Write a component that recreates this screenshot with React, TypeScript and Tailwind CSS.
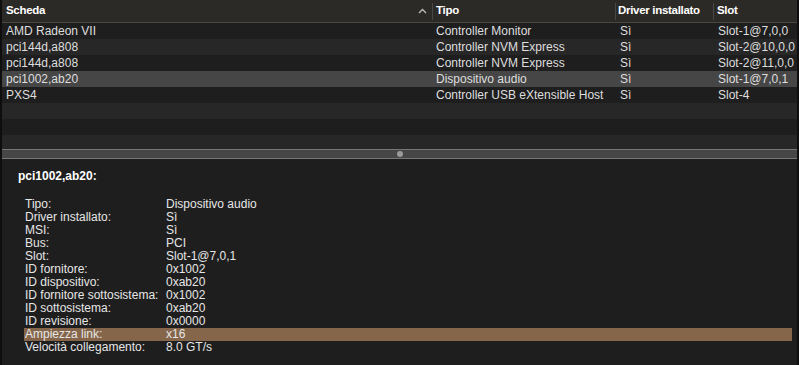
const rows = [
  { name: "AMD Radeon VII", tipo: "Controller Monitor", driver: "Sì", slot: "Slot-1@7,0,0" },
  { name: "pci144d,a808", tipo: "Controller NVM Express", driver: "Sì", slot: "Slot-2@10,0,0" },
  { name: "pci144d,a808", tipo: "Controller NVM Express", driver: "Sì", slot: "Slot-2@11,0,0" },
  { name: "pci1002,ab20", tipo: "Dispositivo audio", driver: "Sì", slot: "Slot-1@7,0,1", selected: true },
  { name: "PXS4", tipo: "Controller USB eXtensible Host", driver: "Sì", slot: "Slot-4" },
];

const details = [
  ["Tipo:", "Dispositivo audio"],
  ["Driver installato:", "Sì"],
  ["MSI:", "Sì"],
  ["Bus:", "PCI"],
  ["Slot:", "Slot-1@7,0,1"],
  ["ID fornitore:", "0x1002"],
  ["ID dispositivo:", "0xab20"],
  ["ID fornitore sottosistema:", "0x1002"],
  ["ID sottosistema:", "0xab20"],
  ["ID revisione:", "0x0000"],
  ["Ampiezza link:", "x16"],
  ["Velocità collegamento:", "8.0 GT/s"],
];

/* ─── Table ─── */

function Table() {
  const filler = Array.from({ length: 3 });
  return (
    <div className="flex h-[149px] flex-col overflow-hidden">
      <div className="flex h-[23px] shrink-0 items-center border-b border-[#4a4845] bg-[#2c2a27] text-[11.5px] font-bold tracking-[-0.3px] text-white">
        <div className="flex w-[430px] items-center justify-between pl-[4px] pr-[5px]">
          <span>Scheda</span>
          <svg width="9" height="6" viewBox="0 0 9 6" fill="none">
            <path d="M1 5L4.5 1.5L8 5" stroke="#bdbdbd" strokeWidth="1.3" />
          </svg>
        </div>
        <div className="h-[17px] w-px bg-[#4a4845]" />
        <div className="w-[182px] pl-[3px]">Tipo</div>
        <div className="h-[17px] w-px bg-[#4a4845]" />
        <div className="w-[97px] pl-[2px]">Driver installato</div>
        <div className="h-[17px] w-px bg-[#4a4845]" />
        <div className="pl-[3px]">Slot</div>
      </div>
      {rows.map((r, i) => (
        <div
          key={i}
          className={`flex h-[16px] shrink-0 items-center text-[12px] text-[#dedede] ${
            r.selected ? "bg-[#464646]" : i % 2 === 1 ? "bg-[#272727]" : "bg-[#1e1e1e]"
          }`}
        >
          <div className="w-[431px] pl-[4px]">{r.name}</div>
          <div className="w-[183px] pl-[3px]">{r.tipo}</div>
          <div className="w-[98px] pl-[4px]">{r.driver}</div>
          <div className="pl-[4px]">{r.slot}</div>
        </div>
      ))}
      {filler.map((_, i) => (
        <div
          key={i}
          className={`h-[16px] shrink-0 ${i % 2 === 0 ? "bg-[#272727]" : "bg-[#1e1e1e]"}`}
        />
      ))}
    </div>
  );
}

/* ─── Splitter ─── */

function Splitter() {
  return (
    <div className="flex h-[10px] shrink-0 items-center justify-center border-y border-[#767676] bg-[#464646]">
      <div className="h-[6px] w-[6px] rounded-full bg-[#9a9a9a]" />
    </div>
  );
}

/* ─── Details ─── */

function Details() {
  return (
    <div className="flex flex-1 flex-col bg-[#1e1e1e] pt-[10px] text-[12px] text-[#e6e6e6]">
      <div className="h-[14px] pl-[16px] font-bold leading-[14px] text-white">pci1002,ab20:</div>
      <div className="ml-[22px] mr-[5px] mt-[15px] flex flex-col">
        {details.map(([k, v]) => (
          <div
            key={k}
            className={`flex h-[13px] items-center leading-[13px] ${
              k === "Ampiezza link:" ? "bg-[#85664a]" : ""
            }`}
          >
            <div className="w-[142px] pl-[1px]">{k}</div>
            <div>{v}</div>
          </div>
        ))}
      </div>
    </div>
  );
}

export default function App() {
  return (
    <div
      className="flex h-[365px] w-[799px] flex-col overflow-hidden border-l-2 border-r-2 border-[#0e0e0e] bg-[#1e1e1e]"
      style={{ fontFamily: '"Liberation Sans", Arial, sans-serif' }}
    >
      <Table />
      <Splitter />
      <Details />
    </div>
  );
}
